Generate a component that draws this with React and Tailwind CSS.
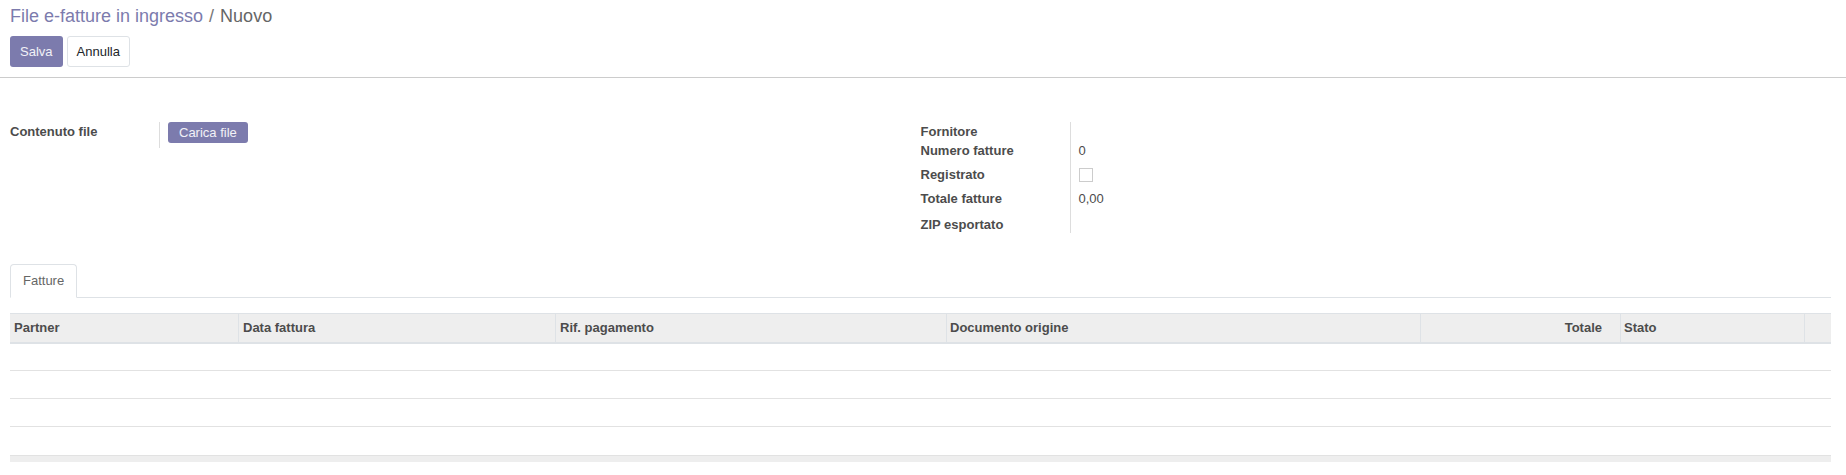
import React from "react";

const cols = [
  { label: "Partner", cls: "pl-[4px]" },
  { label: "Data fattura", cls: "border-l border-[#dee2e6] pl-[4px]" },
  { label: "Rif. pagamento", cls: "border-l border-[#dee2e6] pl-[4px]" },
  { label: "Documento origine", cls: "border-l border-[#dee2e6] pl-[3px]" },
  { label: "Totale", cls: "border-l border-[#dee2e6] justify-end pr-[18px]" },
  { label: "Stato", cls: "border-l border-[#dee2e6] pl-[3px]" },
  { label: "", cls: "border-l border-[#dee2e6]" },
];

function Field({ label, h, pt, children }) {
  return (
    <div className={`flex ${h}`}>
      <div className={`w-[149px] font-bold leading-[16px] ${pt}`}>{label}</div>
      <div className={`flex-1 border-l border-[#dddddd] pl-[8px] leading-[16px] ${pt}`}>{children}</div>
    </div>
  );
}

export default function App() {
  return (
    <div className="h-[475px] bg-white font-['Liberation_Sans',Arial,sans-serif] text-[13px] text-[#4c4c4c]">
      <div className="h-[78px] border-b border-[#cccccc] px-[10px]">
        <div className="pt-[3px] text-[18px] leading-[27px] flex">
          <span className="text-[#7c7bad]">File e-fatture in ingresso</span>
          <span className="px-[6px] text-[#777777]">/</span>
          <span className="text-[#666666]">Nuovo</span>
        </div>
        <div className="mt-[6px] flex gap-[4px]">
          <button className="h-[31px] px-[10px] rounded-[3px] bg-[#7c7bad] text-white/90">Salva</button>
          <button className="h-[31px] px-[9px] rounded-[3px] border border-[#dee2e6] bg-white text-[#212529]">Annulla</button>
        </div>
      </div>

      <div className="pl-[10px] pr-[15px]">
        <div className="grid grid-cols-2 pt-[44px]">
          <div>
            <div className="flex h-[26px]">
              <div className="w-[149px] font-bold leading-[16px] pt-[2px]">Contenuto file</div>
              <div className="flex-1 border-l border-[#dddddd] pl-[8px]">
                <button className="h-[21px] px-[11px] rounded-[3px] bg-[#7c7bad] text-white/90 leading-[21px]">Carica file</button>
              </div>
            </div>
          </div>
          <div>
            <Field label="Fornitore" h="h-[19px]" pt="pt-[2px]" />
            <Field label="Numero fatture" h="h-[19px]" pt="pt-[2px]">0</Field>
            <Field label="Registrato" h="h-[31px]" pt="pt-[7px]">
              <div className="mt-[1px] w-[14px] h-[14px] border border-[#cccccc] bg-white" />
            </Field>
            <Field label="Totale fatture" h="h-[26px]" pt="pt-0">0,00</Field>
            <Field label="ZIP esportato" h="h-[16px]" pt="pt-0" />
          </div>
        </div>

        <div className="mt-[31px] flex border-b border-[#dee2e6]">
          <div className="-mb-px h-[34px] px-[12px] flex items-center rounded-t-[4px] border border-[#dee2e6] border-b-white bg-white text-[#666666]">
            Fatture
          </div>
        </div>

        <div className="mt-[15px]">
          <div className="grid grid-cols-[228px_317px_391px_474px_200px_184px_1fr] h-[31px] bg-[#eeeeee] border-t border-b-2 border-[#dee2e6] font-bold">
            {cols.map((c, i) => (
              <div key={i} className={`flex items-center ${c.cls}`}>{c.label}</div>
            ))}
          </div>
          <div className="h-[27px] border-b border-[#e2e2e2]" />
          <div className="h-[28px] border-b border-[#e2e2e2]" />
          <div className="h-[28px] border-b border-[#e2e2e2]" />
          <div className="h-[28px]" />
          <div className="h-[7px] bg-[#eeeeee] border-t border-[#e2e2e2]" />
        </div>
      </div>
    </div>
  );
}
